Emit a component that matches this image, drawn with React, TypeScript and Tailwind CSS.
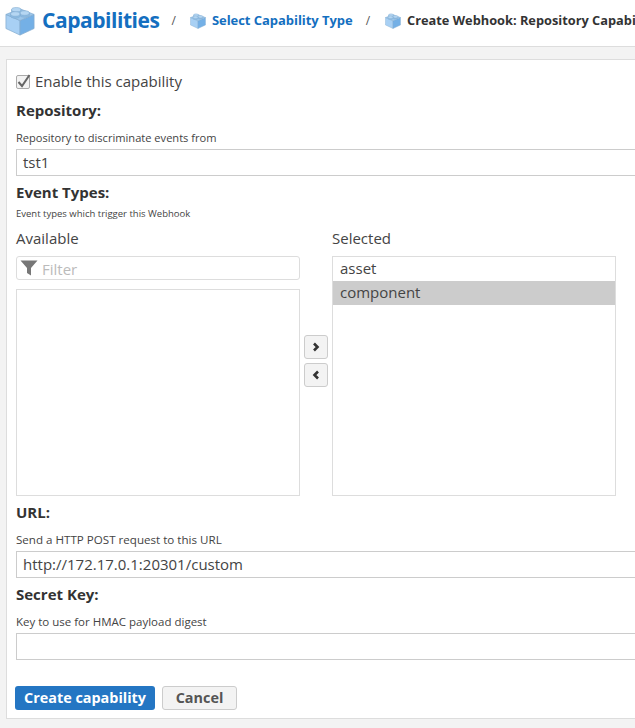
import React from "react";

function Cube({ size }: { size: number }) {
  return (
    <svg width={size} height={size} viewBox="0 0 32 32" className="shrink-0">
      <path d="M1 9 L16 15.5 V31 L1 24 Z" fill="#a8d0f4" stroke="#86aed2" strokeWidth="0.8" />
      <path d="M31 9 L16 15.5 V31 L31 24 Z" fill="#74b0e6" stroke="#86aed2" strokeWidth="0.8" />
      <path d="M16 3 L31 9 L16 15.5 L1 9 Z" fill="#9cc6ea" stroke="#86aed2" strokeWidth="0.8" />
      <path d="M7 4 V6.5 A5 2.4 0 0 0 17 6.5 V4 Z" fill="#8dbce4" stroke="#7fa9cf" strokeWidth="0.6" />
      <ellipse cx="12" cy="4" rx="5" ry="2.4" fill="#b5d6f2" stroke="#7fa9cf" strokeWidth="0.6" />
      <path d="M16 7.5 V9.5 A5 2.4 0 0 0 26 9.5 V7.5 Z" fill="#8dbce4" stroke="#7fa9cf" strokeWidth="0.6" />
      <ellipse cx="21" cy="7.5" rx="5" ry="2.4" fill="#b5d6f2" stroke="#7fa9cf" strokeWidth="0.6" />
      <path d="M6 8.5 V10.5 A5 2.4 0 0 0 16 10.5 V8.5 Z" fill="#8dbce4" stroke="#7fa9cf" strokeWidth="0.6" />
      <ellipse cx="11" cy="8.5" rx="5" ry="2.4" fill="#b5d6f2" stroke="#7fa9cf" strokeWidth="0.6" />
    </svg>
  );
}

function Chevron({ left }: { left?: boolean }) {
  return (
    <svg width="10" height="10" viewBox="0 0 10 10">
      <path d={left ? "M7 1.5 L3.5 5 L7 8.5" : "M3 1.5 L6.5 5 L3 8.5"} fill="none" stroke="#333" strokeWidth="2.6" />
    </svg>
  );
}

function Field({ label, help, value, helpClass }: { label: string; help: string; value: string; helpClass: string }) {
  return (
    <div className="flex flex-col">
      <div className="h-[20px] leading-[18px] text-[15px] font-bold text-[#333]">{label}</div>
      <div className={`mt-[8px] h-[18px] leading-[18px] text-[#444] ${helpClass}`}>{help}</div>
      <div className="mt-[2px] w-[640px] h-[27px] border border-[#ccc] bg-white px-[6px] leading-[25px] text-[15px] text-[#444]">{value}</div>
    </div>
  );
}

export default function App() {
  return (
    <div className="w-[635px] h-[728px] overflow-hidden bg-[#f3f3f3] text-[#333] font-['Open_Sans','Liberation_Sans',sans-serif]">
      <header className="h-[47px] bg-white border-b border-[#ddd] flex items-center pl-[5px] pb-[5px] whitespace-nowrap overflow-hidden">
        <Cube size={30} />
        <span className="ml-[7px] text-[21px] font-bold text-[#146fc0] tracking-[-0.45px]">Capabilities</span>
        <span className="ml-[12px] text-[12px] text-[#555]">/</span>
        <span className="ml-[14px]"><Cube size={16} /></span>
        <span className="ml-[6px] text-[13px] font-bold text-[#146fc0] tracking-[-0.05px]">Select Capability Type</span>
        <span className="ml-[13px] text-[12px] text-[#555]">/</span>
        <span className="ml-[15px]"><Cube size={16} /></span>
        <span className="ml-[6px] text-[12.8px] font-bold text-[#333]">Create Webhook: Repository Capabilities</span>
      </header>

      <main className="ml-[6px] mt-[12px] w-[660px] h-[660px] bg-white border border-[#ddd] pl-[9px] pt-[15px]">
        <div className="flex items-center h-[14px] whitespace-nowrap">
          <span className="w-[14px] h-[14px] border border-[#aaa] rounded-[2px] bg-[#f3f3f3] flex items-center justify-center">
            <svg width="14" height="14" viewBox="0 0 14 14" className="overflow-visible shrink-0">
              <path d="M2.5 7 L6 11 L13.5 0" fill="none" stroke="#666" strokeWidth="2" />
            </svg>
          </span>
          <span className="ml-[5px] mb-[2px] text-[15px] leading-[12px] text-[#444]">Enable this capability</span>
        </div>

        <div className="mt-[12px]">
          <Field label="Repository:" help="Repository to discriminate events from" value="tst1" helpClass="text-[11.1px]" />
        </div>

        <div className="mt-[7px] h-[20px] leading-[18px] text-[15px] font-bold text-[#333]">Event Types:</div>
        <div className="mt-[3px] h-[16px] leading-[16px] text-[9.5px] text-[#444]">Event types which trigger this Webhook</div>

        <div className="mt-[7px] flex items-start">
          <div className="w-[284px] flex flex-col">
            <div className="h-[20px] leading-[18px] text-[15px] text-[#444]">Available</div>
            <div className="mt-[7px] h-[24px] border border-[#ddd] rounded-[3px] flex items-center pl-[3px]">
              <svg width="18" height="16" viewBox="0 0 18 16" className="shrink-0">
                <path d="M0.5 0.5 H17.5 L11 8 V15.5 L7 13 V8 Z" fill="#777" />
              </svg>
              <span className="ml-[4px] pt-[2px] text-[15px] leading-[22px] text-[#bbb]">Filter</span>
            </div>
            <div className="mt-[9px] h-[207px] border border-[#ddd]" />
          </div>

          <div className="w-[32px] flex flex-col items-center pt-[106px] gap-[4px]">
            <div className="w-[24px] h-[24px] border border-[#ccc] rounded-[3px] bg-[#f3f3f3] flex items-center justify-center"><Chevron /></div>
            <div className="w-[24px] h-[24px] border border-[#ccc] rounded-[3px] bg-[#f3f3f3] flex items-center justify-center"><Chevron left /></div>
          </div>

          <div className="w-[284px] flex flex-col">
            <div className="h-[20px] leading-[18px] text-[15px] text-[#444]">Selected</div>
            <div className="mt-[7px] h-[240px] border border-[#ddd] text-[15px] text-[#444]">
              <div className="h-[24px] leading-[22px] px-[7px]">asset</div>
              <div className="h-[24px] leading-[22px] px-[7px] bg-[#ccc]">component</div>
            </div>
          </div>
        </div>

        <div className="mt-[7px]">
          <Field label="URL:" help="Send a HTTP POST request to this URL" value="http://172.17.0.1:20301/custom" helpClass="text-[11.6px]" />
        </div>
        <div className="mt-[7px]">
          <Field label="Secret Key:" help="Key to use for HMAC payload digest" value="" helpClass="text-[11.5px]" />
        </div>

        <div className="mt-[26px] -ml-[1px] flex gap-[7px]">
          <div className="w-[140px] h-[24px] pb-[1px] rounded-[3px] bg-[#2476c3] text-white text-[14.4px] font-bold flex items-center justify-center">Create capability</div>
          <div className="w-[75px] h-[24px] pb-[1px] rounded-[3px] border border-[#ccc] bg-[#f3f3f3] text-[#555] text-[14.4px] font-bold flex items-center justify-center">Cancel</div>
        </div>
      </main>
    </div>
  );
}
